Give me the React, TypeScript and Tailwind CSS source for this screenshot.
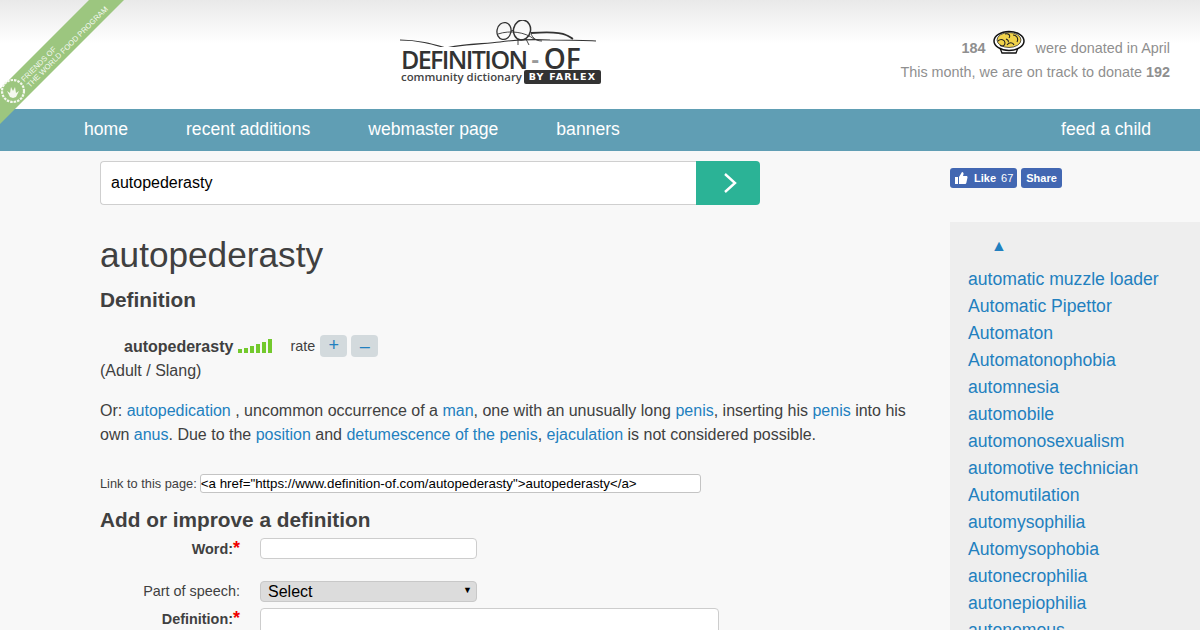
const sideLinks = [
  'automatic muzzle loader',
  'Automatic Pipettor',
  'Automaton',
  'Automatonophobia',
  'automnesia',
  'automobile',
  'automonosexualism',
  'automotive technician',
  'Automutilation',
  'automysophilia',
  'Automysophobia',
  'autonecrophilia',
  'autonepiophilia',
  'autonomous',
]

const navLinks = ['home', 'recent additions', 'webmaster page', 'banners']

const bars = [4, 5, 7, 9, 11, 14]

const A = ({ children }: { children: React.ReactNode }) => (
  <a href="#" className="text-[#2280bf]">
    {children}
  </a>
)

const Ribbon = () => (
  <div className="absolute left-0 top-0 w-[125px] h-[125px]">
    <svg width="125" height="125" viewBox="0 0 125 125" className="absolute left-0 top-0">
      <polygon points="89,0 124,0 0,124 0,89" fill="#9cc67f" />
      <circle cx="13" cy="91" r="11" fill="none" stroke="#f4f8ef" strokeWidth="2.2" strokeDasharray="2.5 1" />
      <path d="M7 91l3 6 3 1 3-1 3-6-3 2-1-6-2 4-2-4-1 6z" fill="#f4f8ef" />
    </svg>
    <div className="absolute left-[20px] top-[78px] origin-top-left -rotate-45 text-[7.6px] leading-[7.5px] text-[#f6faf2] whitespace-nowrap font-['Liberation_Sans',sans-serif]">
      <div>FRIENDS OF</div>
      <div>THE WORLD FOOD PROGRAM</div>
    </div>
  </div>
)

const Logo = () => (
  <div className="w-[201px] h-[68px] flex flex-col items-stretch">
    <svg width="201" height="27" viewBox="0 0 201 27" className="shrink-0 block">
      <path d="M0 20C18 20 32 24 46 28C64 24 84 24 100 22C114 20 128 19 150 20C165 20 182 20 196 21" fill="none" stroke="#333" strokeWidth="1.1" />
      <path d="M131 13C145 12 160 12 166 15C169 16 171 18 173 19" fill="none" stroke="#333" strokeWidth="1.8" />
      <ellipse cx="104" cy="11" rx="7" ry="8.5" fill="none" stroke="#333" strokeWidth="1.3" transform="rotate(12 104 11)" />
      <ellipse cx="122" cy="10" rx="8.5" ry="10" fill="none" stroke="#333" strokeWidth="1.5" transform="rotate(12 122 10)" />
      <path d="M111 11L114 10M131 14C133 18 136 21 142 21M118 19L118 25M126 19L129 25M98 14C110 10 125 12 134 19" fill="none" stroke="#333" strokeWidth="0.9" />
    </svg>
    <div className="h-[24px] flex items-center pl-[1px] font-['Open_Sans',sans-serif] font-semibold text-[#333] leading-none whitespace-nowrap">
      <span className="text-[25px] tracking-[-1.6px]">DEFINITION</span>
      <span className="text-[23px] text-[#999] ml-[5px] mr-[5px] font-bold">-</span>
      <span className="text-[28px] tracking-[-0.2px] -mt-[2px]">OF</span>
    </div>
    <div className="flex items-center justify-between whitespace-nowrap -mt-[1px]">
      <span className="pl-[1px] font-['Open_Sans',sans-serif] font-semibold text-[11.4px] text-[#444] leading-none">community dictionary</span>
      <span className="bg-[#333] text-white rounded-[2px] font-['DejaVu_Sans',sans-serif] font-bold text-[9.5px] tracking-[1.2px] leading-[14px] w-[77px] text-center h-[14px]">BY FARLEX</span>
    </div>
  </div>
)

const Bowl = () => (
  <svg width="32" height="24" viewBox="0 0 32 24">
    <path d="M7 18l2 5h14l2-5z" fill="#fff" stroke="#111" strokeWidth="1.3" />
    <ellipse cx="16" cy="11" rx="15" ry="9.5" fill="#fff" stroke="#111" strokeWidth="1.5" />
    <ellipse cx="16" cy="10" rx="12" ry="7.5" fill="#f0d24a" stroke="#333" strokeWidth="0.8" />
    <path d="M5 11c3-3 7-1 7 2s-3 4-5 2M12 4c3-1 6 1 4 4M20 5c3 0 6 3 4 7M14 15c2-3 6-3 7 0M13 9c2 1 3 2 2 3" fill="none" stroke="#222" strokeWidth="1.1" />
  </svg>
)

export default function App() {
  return (
    <div className="relative w-[1200px] h-[630px] overflow-hidden bg-[#f8f8f8] text-[#404040] font-['Liberation_Sans',sans-serif]">
      <header className="h-[109px] bg-gradient-to-b from-[#e9e9e9] via-white via-[40%] to-white flex">
        <div className="w-[400px] shrink-0" />
        <div className="pt-[20px]">
          <Logo />
        </div>
        <div className="flex-1 pr-[30px] pt-[35px] text-right text-[14.4px] text-[#8f8f8f]">
          <div className="flex items-center justify-end h-[26px] pt-[1px]">
            <b className="font-bold">184</b>
            <span className="ml-[7px] mr-[11px] -mt-[14px]">
              <Bowl />
            </span>
            <span>were donated in April</span>
          </div>
          <div className="mt-[1px]">
            This month, we are on track to donate <b>192</b>
          </div>
        </div>
      </header>

      <nav className="h-[42px] bg-[#609eb4] flex items-center pl-[84px] pr-[49px] text-white text-[17.6px] pb-[2px]">
        <div className="flex gap-[58px]">
          {navLinks.map((l) => (
            <a key={l} href="#">
              {l}
            </a>
          ))}
        </div>
        <a href="#" className="ml-auto">
          feed a child
        </a>
      </nav>

      <div className="flex">
        <main className="w-[950px] shrink-0 pl-[100px] pt-[10px]">
          <div className="flex w-[660px] h-[44px]">
            <div className="flex-1 border border-[#cfcfcf] border-r-0 rounded-l-[4px] bg-white pl-[10px] flex items-center text-[16px] text-black">
              autopederasty
            </div>
            <div className="w-[64px] bg-[#2bb396] rounded-r-[4px] flex items-center justify-center pl-[4px]">
              <svg width="16" height="22" viewBox="0 0 16 22">
                <path d="M3 2l10 9-10 9" fill="none" stroke="#fff" strokeWidth="2.4" />
              </svg>
            </div>
          </div>

          <h1 className="text-[35.2px] leading-[42px] mt-[29px] font-normal">autopederasty</h1>
          <h2 className="text-[20.8px] leading-[24px] mt-[12px] font-bold">Definition</h2>

          <div className="flex items-center h-[24px] mt-[23px] pl-[24px] text-[16px]">
            <b>autopederasty</b>
            <span className="flex items-end gap-[2px] h-[14px] ml-[5px] -mt-[3px]">
              {bars.map((h, i) => (
                <span key={i} className="w-[4px] bg-[#73c92d]" style={{ height: h }} />
              ))}
            </span>
            <span className="ml-[18px] text-[14.4px]">rate</span>
            <span className="ml-[5px] w-[27px] h-[22px] -mt-[3px] rounded-[4px] bg-[#d3dadd] text-[#2280bf] text-[18px] leading-[20px] text-center">+</span>
            <span className="ml-[4px] w-[27px] h-[22px] -mt-[3px] rounded-[4px] bg-[#d3dadd] text-[#2280bf] text-[18px] leading-[22px] text-center">–</span>
          </div>
          <div className="text-[16px] leading-[24px]">(Adult / Slang)</div>

          <p className="text-[16px] leading-[24px] mt-[16px] w-[810px]">
            Or: <A>autopedication</A> , uncommon occurrence of a <A>man</A>, one with an unusually long <A>penis</A>, inserting his <A>penis</A> into his own <A>anus</A>. Due to the <A>position</A> and <A>detumescence of the penis</A>, <A>ejaculation</A> is not considered possible.
          </p>

          <div className="flex items-center mt-[26px] h-[20px] text-[12.8px]">
            <span className="pt-[2px]">Link to this page:</span>
            <div className="ml-[3px] w-[501px] h-[19px] border border-[#c4c4c4] rounded-[3px] bg-white text-black text-[13.33px] leading-[17px] whitespace-nowrap overflow-hidden">
              {'<a href="https://www.definition-of.com/autopederasty">autopederasty</a>'}
            </div>
          </div>

          <h2 className="text-[20.8px] leading-[24px] mt-[15px] font-bold">Add or improve a definition</h2>

          <div className="flex mt-[6px] h-[21px] items-center">
            <div className="w-[140px] text-right text-[14.4px] font-bold pt-[3px]">
              Word:<span className="text-[#f00000] text-[18px] leading-none">*</span>
            </div>
            <div className="ml-[20px] w-[217px] h-[21px] border border-[#cdcdcd] rounded-[4px] bg-white" />
          </div>
          <div className="flex mt-[22px] h-[21px] items-center">
            <div className="w-[140px] text-right text-[14.4px]">Part of speech:</div>
            <div className="ml-[20px] w-[217px] h-[21px] border border-[#c8c8c8] rounded-[4px] bg-[#dcdcdc] flex items-center justify-between pl-[7px] pr-[4px] text-[16px] text-black">
              <span>Select</span>
              <span className="text-[9px] leading-none -mt-[3px]">▼</span>
            </div>
          </div>
          <div className="flex mt-[6px] items-start">
            <div className="w-[140px] text-right text-[14.4px] font-bold leading-[21px] pt-[1px]">
              Definition:<span className="text-[#f00000] text-[18px] leading-none">*</span>
            </div>
            <div className="ml-[20px] w-[459px] h-[60px] border border-[#cdcdcd] rounded-[4px] bg-white" />
          </div>
        </main>

        <aside className="flex-1 min-w-0">
          <div className="pt-[17px] flex gap-[4px] h-[71px]">
            <div className="h-[20px] w-[67px] rounded-[3px] bg-[#4267b2] text-white text-[11px] flex items-center pl-[4px] whitespace-nowrap">
              <svg width="14" height="14" viewBox="0 0 14 14" className="shrink-0">
                <path d="M1 6h3v7H1zM5 6l3-5c1.2 0 1.8 1 1.5 2.2L9 5h3.4c.8 0 1.3.7 1.1 1.5l-1.2 5.6c-.1.5-.6.9-1.1.9H5z" fill="#fff" />
              </svg>
              <b className="ml-[6px]">Like</b>
              <span className="ml-[5px]">67</span>
            </div>
            <div className="h-[20px] w-[41px] rounded-[3px] bg-[#4267b2] text-white text-[11px] font-bold flex items-center justify-center">
              Share
            </div>
          </div>
          <div className="bg-[#eeeeee] h-[500px] pl-[18px] pt-[15px]">
            <div className="pl-[23px] h-[29px] text-[#2280bf] text-[16px] leading-[18px]">▲</div>
            <ul className="text-[17.6px] leading-[27px] text-[#2280bf] whitespace-nowrap">
              {sideLinks.map((l) => (
                <li key={l}>
                  <a href="#">{l}</a>
                </li>
              ))}
            </ul>
          </div>
        </aside>
      </div>

      <Ribbon />
    </div>
  )
}
